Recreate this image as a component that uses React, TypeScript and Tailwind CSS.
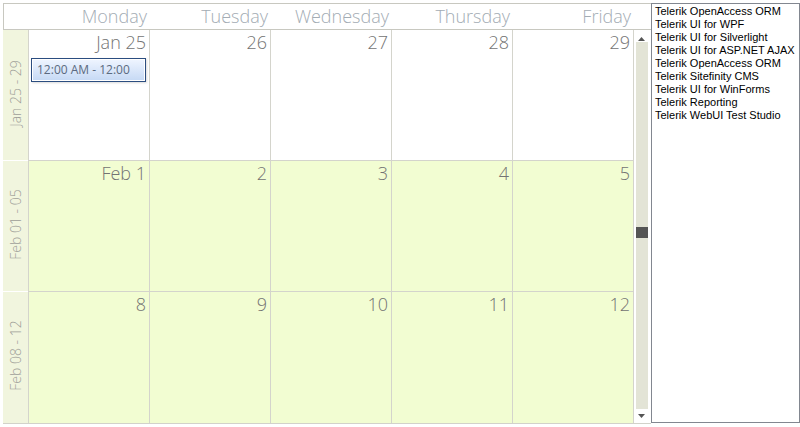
const days = ["Monday", "Tuesday", "Wednesday", "Thursday", "Friday"];

const weeks = [
  { label: "Jan 25 - 29", dates: ["Jan 25", "26", "27", "28", "29"], shaded: false },
  { label: "Feb 01 - 05", dates: ["Feb 1", "2", "3", "4", "5"], shaded: true },
  { label: "Feb 08 - 12", dates: ["8", "9", "10", "11", "12"], shaded: true },
];

const products = [
  "Telerik OpenAccess ORM",
  "Telerik UI for WPF",
  "Telerik UI for Silverlight",
  "Telerik UI for ASP.NET AJAX",
  "Telerik OpenAccess ORM",
  "Telerik Sitefinity CMS",
  "Telerik UI for WinForms",
  "Telerik Reporting",
  "Telerik WebUI Test Studio",
];

const light = { fontFamily: '"Open Sans", "Noto Sans", sans-serif' };

function Arrow({ down }: { down?: boolean }) {
  return (
    <svg width="7" height="4" viewBox="0 0 7 4" className="block">
      {down ? <path d="M0 0H7L3.5 4Z" fill="#555" /> : <path d="M0 4H7L3.5 0Z" fill="#555" />}
    </svg>
  );
}

export default function App() {
  return (
    <div className="w-[800px] h-[427px] bg-white flex pl-[3px] pt-[3px]">
      {/* Scheduler */}
      <div className="w-[648px] h-[420px] flex flex-col border-t border-[#c8c8c0]">
        {/* Day headers */}
        <div className="h-[26px] flex border-l border-b border-[#c8c8c0] text-[18px] font-light text-[#a3acb4]" style={light}>
          <div className="w-[25px]" />
          {days.map((d) => (
            <div key={d} className="w-[121px] text-right pr-[3px] leading-[25px]">
              {d}
            </div>
          ))}
          <div className="w-[17px]" />
        </div>

        {/* Body */}
        <div className="flex h-[394px] border-b border-[#d2d2ca]">
          {/* Week column */}
          <div className="w-[26px] grid grid-rows-[131px_131px_131px] bg-[#f1f5de] border-r border-[#d4d4cc]">
            {weeks.map((w, i) => (
              <div
                key={w.label}
                className={`flex items-center justify-center overflow-hidden ${i < 2 ? "border-b border-white" : ""}`}
              >
                <span className="-rotate-90 whitespace-nowrap text-[14px] font-light text-[#9e9e98] pl-[4px]" style={light}>
                  {w.label}
                </span>
              </div>
            ))}
          </div>

          {/* Day cells */}
          <div className="w-[605px] grid grid-cols-5 grid-rows-[131px_131px_131px]">
            {weeks.map((w, wi) =>
              w.dates.map((date, di) => (
                <div
                  key={`${wi}-${di}`}
                  className={`flex flex-col border-r border-[#d4d4cc] ${wi < 2 ? "border-b" : ""} ${
                    w.shaded ? "bg-[#f2fdd2]" : "bg-white"
                  }`}
                >
                  <div className="text-right pr-[3px] h-[24px] leading-[24px] text-[18px] font-light text-[#737373]" style={light}>
                    {date}
                  </div>
                  {wi === 0 && di === 0 && (
                    <div className="mt-[4px] ml-[2px] mr-[3px] h-[24px] border border-[#2b4d80] shadow-[1px_1px_2px_rgba(0,0,0,0.15)]">
                      <div className="h-full border border-white bg-gradient-to-b from-[#eef4ff] to-[#c7daf5] pl-[4px] text-[12px] leading-[20px] text-[#5b6a80] whitespace-nowrap overflow-hidden" style={light}>
                        12:00 AM - 12:00
                      </div>
                    </div>
                  )}
                </div>
              ))
            )}
          </div>

          {/* Scrollbar */}
          <div className="w-[17px] flex flex-col bg-white">
            <div className="h-[11px] flex items-end pl-[4px]">
              <Arrow />
            </div>
            <div className="mt-[1px] ml-[2px] w-[12px] h-[367px] bg-[#e3e4d6] pt-[185px]">
              <div className="h-[11px] bg-[#555]" />
            </div>
            <div className="mt-[5px] pl-[4px]">
              <Arrow down />
            </div>
          </div>
        </div>
      </div>

      {/* List box */}
      <div className="w-[149px] h-[420px] border border-[#828790] pl-[3px] pt-[1px] bg-white">
        {products.map((p, i) => (
          <div
            key={i}
            className="text-[11px] leading-[13px] text-black whitespace-nowrap"
            style={{ fontFamily: '"Liberation Sans", Arial, sans-serif' }}
          >
            {p}
          </div>
        ))}
      </div>
    </div>
  );
}
